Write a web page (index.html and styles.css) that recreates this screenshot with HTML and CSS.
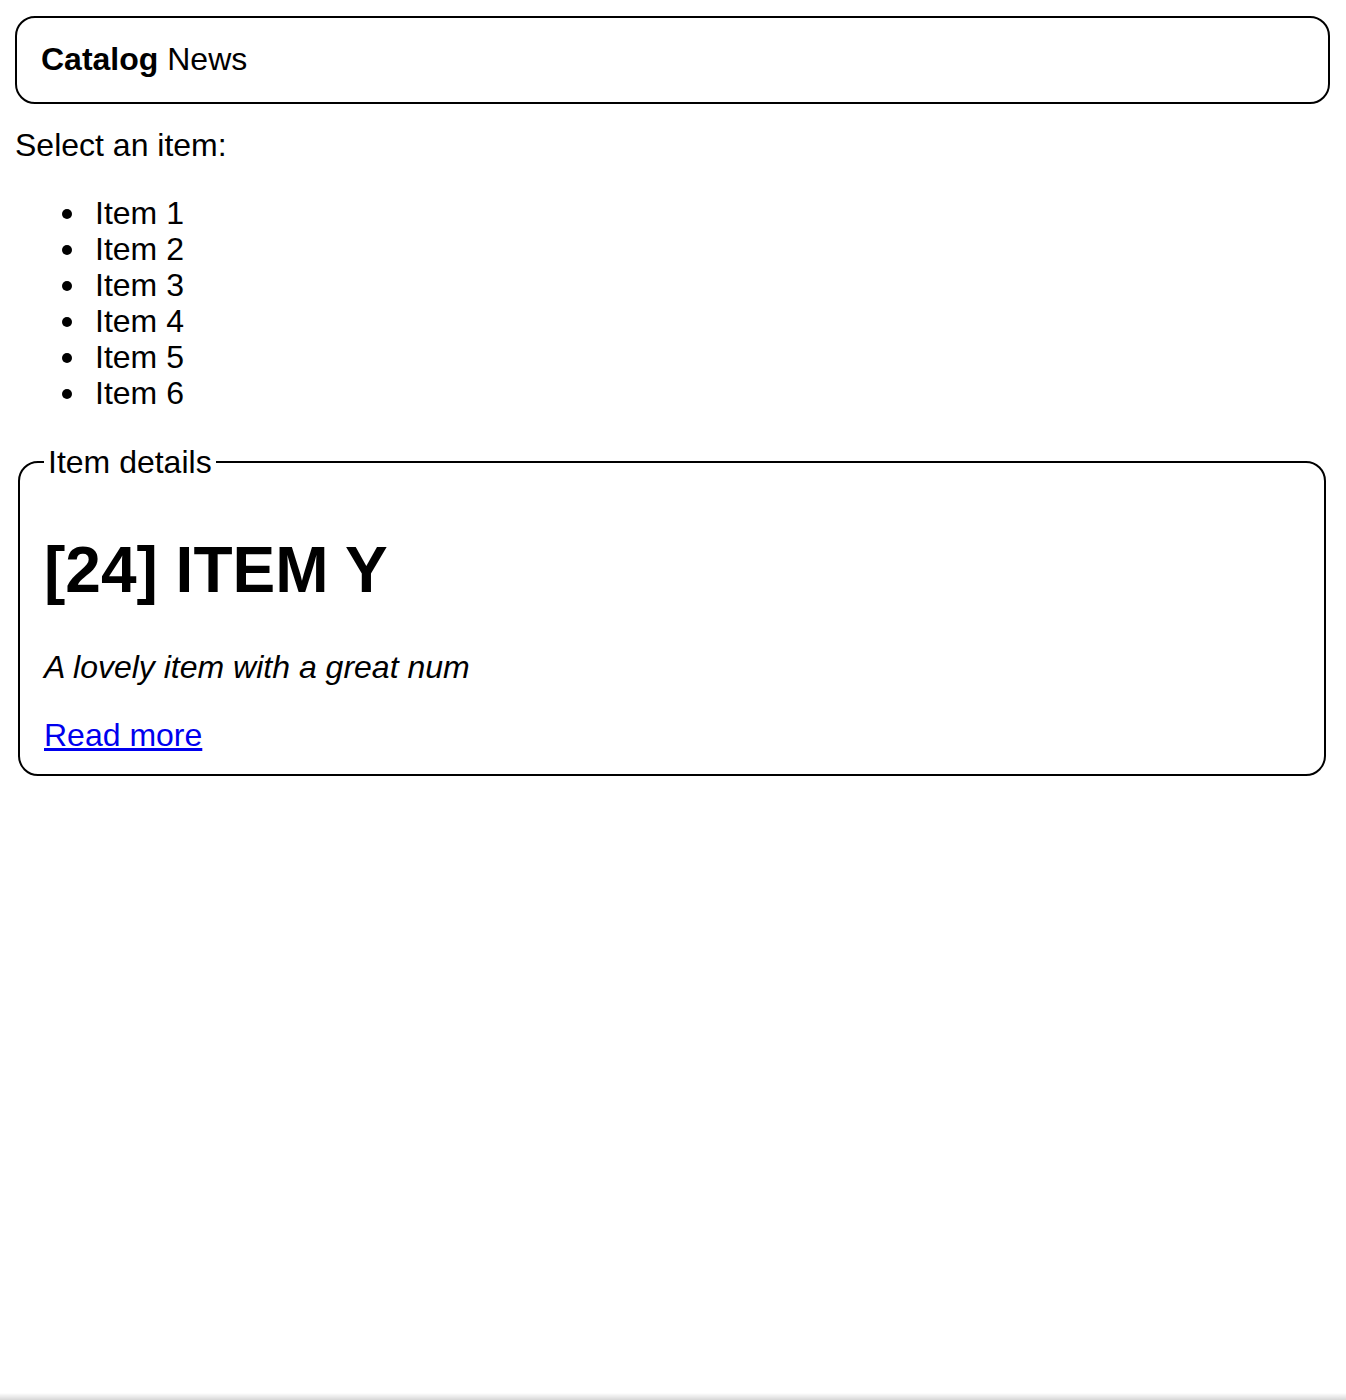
FILE: index.html
```html
<!DOCTYPE html>
<html lang="en">
<head>
<meta charset="utf-8">
<title>Catalog News</title>
<link rel="stylesheet" href="styles.css">
</head>
<body>
  <header class="site-header">
    <strong class="brand">Catalog</strong> News
  </header>
  <div class="picker">
    <div class="picker-label">Select an item:</div>
    <ul class="item-list">
      <li>Item 1</li>
      <li>Item 2</li>
      <li>Item 3</li>
      <li>Item 4</li>
      <li>Item 5</li>
      <li>Item 6</li>
    </ul>
  </div>
  <fieldset class="details">
    <legend class="details-legend">Item details</legend>
    <h1 class="details-title">[24] ITEM Y</h1>
    <p class="details-desc"><em>A lovely item with a great num</em></p>
    <div class="details-link"><a href="#">Read more</a></div>
  </fieldset>
  <div class="bottom-shade"></div>
</body>
</html>
```
FILE: styles.css
```css
html, body {
  background: #fff;
}
body {
  margin: 16px 16px 16px 15px;
  font-family: "Liberation Sans", Arial, Helvetica, sans-serif;
  font-size: 32px;
  line-height: 36px;
  color: #000;
}
.site-header {
  border: 2px solid #000;
  border-radius: 20px;
  padding: 23px 24px 25px;
  line-height: 36px;
}
.brand {
  font-weight: bold;
}
.picker-label {
  margin-top: 23px;
}
.item-list {
  margin: 32px 0 33px 0;
  padding-left: 80px;
  list-style: none;
}
.item-list li {
  position: relative;
  line-height: 36px;
}
.item-list li::before {
  content: "";
  position: absolute;
  left: -33px;
  top: 14px;
  width: 10px;
  height: 10px;
  border-radius: 50%;
  background: #000;
}
.details {
  margin: 0 4px 0 3px;
  border: 2px solid #000;
  border-radius: 20px;
  padding: 11px 24px 21px;
  min-inline-size: 0;
}
.details-legend {
  padding: 0 4px;
  line-height: 36px;
}
.details-title {
  margin: 42px 0;
  font-size: 64px;
  line-height: 74px;
  font-weight: bold;
}
.details-desc {
  margin: 0 0 32px 0;
}
.details-link a {
  color: #0000ee;
  text-decoration: underline;
}
.bottom-shade {
  position: fixed;
  left: 0;
  right: 0;
  bottom: 0;
  height: 7px;
  background: linear-gradient(to bottom, rgba(0,0,0,0), rgba(0,0,0,0.16));
  pointer-events: none;
}
```
